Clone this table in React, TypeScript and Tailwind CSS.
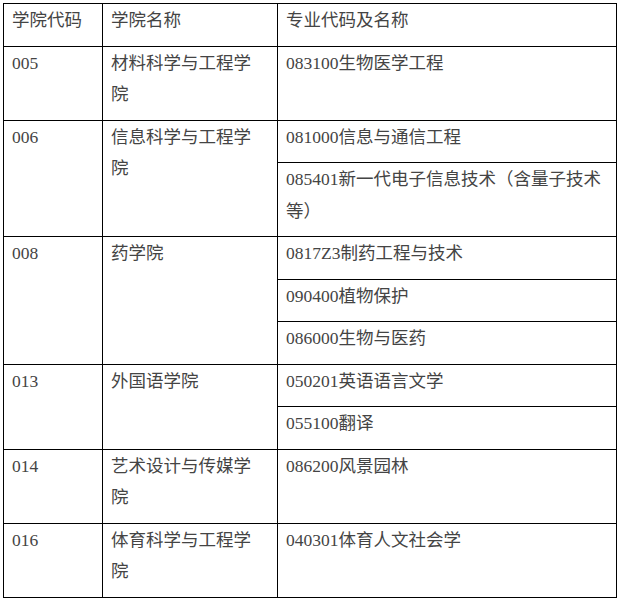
const ROWS = [
  { code: '005', school: '材料科学与工程学院', majors: ['083100生物医学工程'] },
  { code: '006', school: '信息科学与工程学院', majors: ['081000信息与通信工程', '085401新一代电子信息技术（含量子技术等）'] },
  { code: '008', school: '药学院', majors: ['0817Z3制药工程与技术', '090400植物保护', '086000生物与医药'] },
  { code: '013', school: '外国语学院', majors: ['050201英语语言文学', '055100翻译'] },
  { code: '014', school: '艺术设计与传媒学院', majors: ['086200风景园林'] },
  { code: '016', school: '体育科学与工程学院', majors: ['040301体育人文社会学'] },
];

const cell = 'border border-black align-top pt-[1px] pb-[9px] pl-[8px] leading-[31.5px]';

export default function App() {
  return (
    <div
      className="w-[620px] h-[601px] bg-white pt-[3px] pl-[3px] text-[17.5px] text-[#444444]"
      style={{ fontFamily: '"Liberation Serif", "Noto Sans CJK SC", serif' }}
    >
      <table className="table-fixed border-collapse w-[614px]">
        <colgroup>
          <col className="w-[99px]" />
          <col className="w-[175px]" />
          <col />
        </colgroup>
        <tbody>
          <tr>
            <td className={`${cell} pr-[8px]`}>学院代码</td>
            <td className={`${cell} pr-[14px]`}>学院名称</td>
            <td className={`${cell} pr-[6px]`}>专业代码及名称</td>
          </tr>
          {ROWS.map((r) =>
            r.majors.map((m, i) => (
              <tr key={r.code + m}>
                {i === 0 && (
                  <>
                    <td rowSpan={r.majors.length} className={`${cell} pr-[8px]`}>
                      {r.code}
                    </td>
                    <td rowSpan={r.majors.length} className={`${cell} pr-[14px]`}>
                      {r.school}
                    </td>
                  </>
                )}
                <td className={`${cell} pr-[6px]`}>{m}</td>
              </tr>
            ))
          )}
        </tbody>
      </table>
    </div>
  );
}
